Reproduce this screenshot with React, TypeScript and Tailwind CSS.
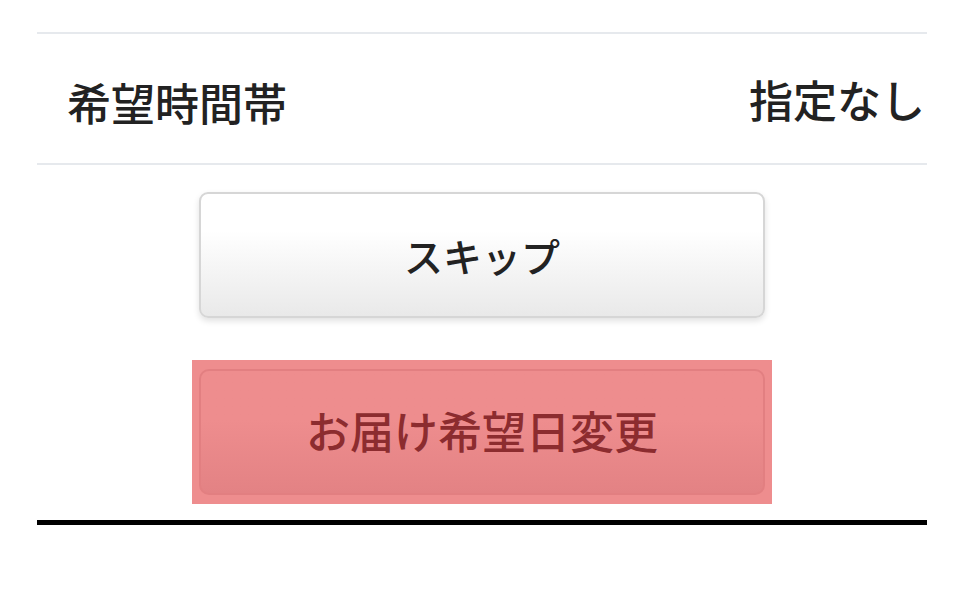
export default function App() {
  return (
    <div className="w-[960px] h-[600px] bg-white font-['Noto_Sans_CJK_JP',sans-serif] text-[#222]">
      <div className="ml-[37px] w-[890px] pt-[32px]">
        {/* 希望時間帯 row */}
        <div className="flex items-center justify-between h-[133px] border-y-2 border-[#e6e9ed]">
          <span className="pl-[30px] pt-[6px] text-[44px] leading-none font-medium">希望時間帯</span>
          <span className="pr-[2px] text-[44px] leading-none font-medium">指定なし</span>
        </div>

        {/* buttons */}
        <div className="flex flex-col items-center pt-[27px]">
          <button className="w-[566px] h-[126px] rounded-[9px] border-2 border-[#d6d6d6] bg-gradient-to-b from-white from-30% to-[#e9e9e9] shadow-[0_3px_6px_rgba(0,0,0,0.12)] text-[39px] font-medium text-[#222]">
            スキップ
          </button>
          <div className="mt-[42px] w-[580px] h-[144px] bg-[#ee8d8e] flex items-center justify-center">
            <button className="w-[566px] h-[126px] rounded-[10px] border-2 border-[#e27f81] bg-gradient-to-b from-[#ee8d8e] from-40% to-[#e38284] pb-[4px] text-[44px] font-medium text-[#8c2c2f]">
              お届け希望日変更
            </button>
          </div>
        </div>

        <div className="mt-[16px] h-[5px] bg-black" />
      </div>
    </div>
  );
}
